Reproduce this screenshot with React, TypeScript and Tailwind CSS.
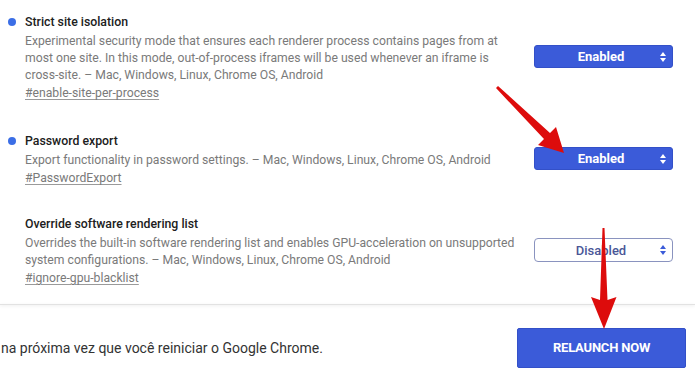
import React from "react";

const font = { fontFamily: "Roboto, 'Liberation Sans', Arial, sans-serif" };

function Arrows({ color }: { color: string }) {
  return (
    <svg width="8" height="12" viewBox="0 0 8 12" className="shrink-0">
      <path d="M4 1 L7 5 L1 5 Z" fill={color} />
      <path d="M4 11 L7 7 L1 7 Z" fill={color} />
    </svg>
  );
}

function Select({ enabled }: { enabled: boolean }) {
  if (enabled) {
    return (
      <div className="w-[139px] h-[23px] rounded-[3px] bg-[#3b5bd9] border border-[#3350c8] flex items-center pl-[8px] pr-[5px] shrink-0">
        <span className="flex-1 text-center text-white font-bold text-[13px] leading-none">Enabled</span>
        <Arrows color="#ffffff" />
      </div>
    );
  }
  return (
    <div className="w-[139px] h-[24px] rounded-[4px] bg-white border border-[#8a93bf] flex items-center pl-[8px] pr-[5px] shrink-0">
      <span className="flex-1 text-center text-[#4a5797] font-medium text-[13px] leading-none">Disabled</span>
      <Arrows color="#3b5bd9" />
    </div>
  );
}

function Row({
  dot,
  title,
  lines,
  link,
  enabled,
  className,
}: {
  dot: boolean;
  title: string;
  lines: string[];
  link: string;
  enabled: boolean;
  className?: string;
}) {
  return (
    <div className={"flex items-center pr-[22px] " + (className ?? "")}>
      <div className="w-[25px] shrink-0 self-start h-[22px] flex items-center pl-[8px]">
        {dot && <div className="w-[8px] h-[8px] rounded-full bg-[#3b6ee6]" />}
      </div>
      <div className="flex-1 min-w-0 flex flex-col">
        <div className="text-[12.3px] leading-[22px] font-medium text-[#202020]">{title}</div>
        {lines.map((l, i) => (
          <div key={i} className="text-[12.2px] leading-[17px] text-[#7a7a7a] whitespace-nowrap">
            {l}
          </div>
        ))}
        <div className="text-[12.2px] leading-[18px] text-[#7a7a7a] underline decoration-[#9a9a9a] underline-offset-2">
          {link}
        </div>
      </div>
      <Select enabled={enabled} />
    </div>
  );
}

export default function App() {
  return (
    <div className="relative w-[695px] h-[378px] bg-white overflow-hidden" style={font}>
      <div className="pt-[11px]">
        <Row
          dot
          title="Strict site isolation"
          lines={[
            "Experimental security mode that ensures each renderer process contains pages from at",
            "most one site. In this mode, out-of-process iframes will be used whenever an iframe is",
            "cross-site. – Mac, Windows, Linux, Chrome OS, Android",
          ]}
          link="#enable-site-per-process"
          enabled
        />
        <Row
          dot
          className="mt-[28px]"
          title="Password export"
          lines={["Export functionality in password settings. – Mac, Windows, Linux, Chrome OS, Android"]}
          link="#PasswordExport"
          enabled
        />
        <Row
          dot={false}
          className="mt-[26px]"
          title="Override software rendering list"
          lines={[
            "Overrides the built-in software rendering list and enables GPU-acceleration on unsupported",
            "system configurations. – Mac, Windows, Linux, Chrome OS, Android",
          ]}
          link="#ignore-gpu-blacklist"
          enabled={false}
        />
      </div>
      <div className="mt-[17px] h-[1px] bg-[#e2e2e2] shadow-[0_1px_3px_rgba(0,0,0,0.12)]" />
      <div className="flex items-center justify-between pl-[1px] pr-[9px] mt-[23px]">
        <div className="text-[14px] text-[#333333] whitespace-nowrap">
          na próxima vez que você reiniciar o Google Chrome.
        </div>
        <div className="w-[169px] h-[40px] rounded-[2px] bg-[#3b5bd9] border border-[#3350c8] flex items-center justify-center">
          <span className="text-white font-bold text-[13px] tracking-[-0.2px]">RELAUNCH NOW</span>
        </div>
      </div>
      <svg className="absolute left-0 top-0 pointer-events-none" width="695" height="378" viewBox="0 0 695 378">
        <polygon
          points="496,88 544,139 538,145 564,153 556,127 550,133 498,86"
          fill="#dd0c0c"
        />
        <polygon
          points="602.5,228 604.5,228 607.5,300 616.5,297 604,329 591,297 600,300"
          fill="#dd0c0c"
        />
      </svg>
    </div>
  );
}
